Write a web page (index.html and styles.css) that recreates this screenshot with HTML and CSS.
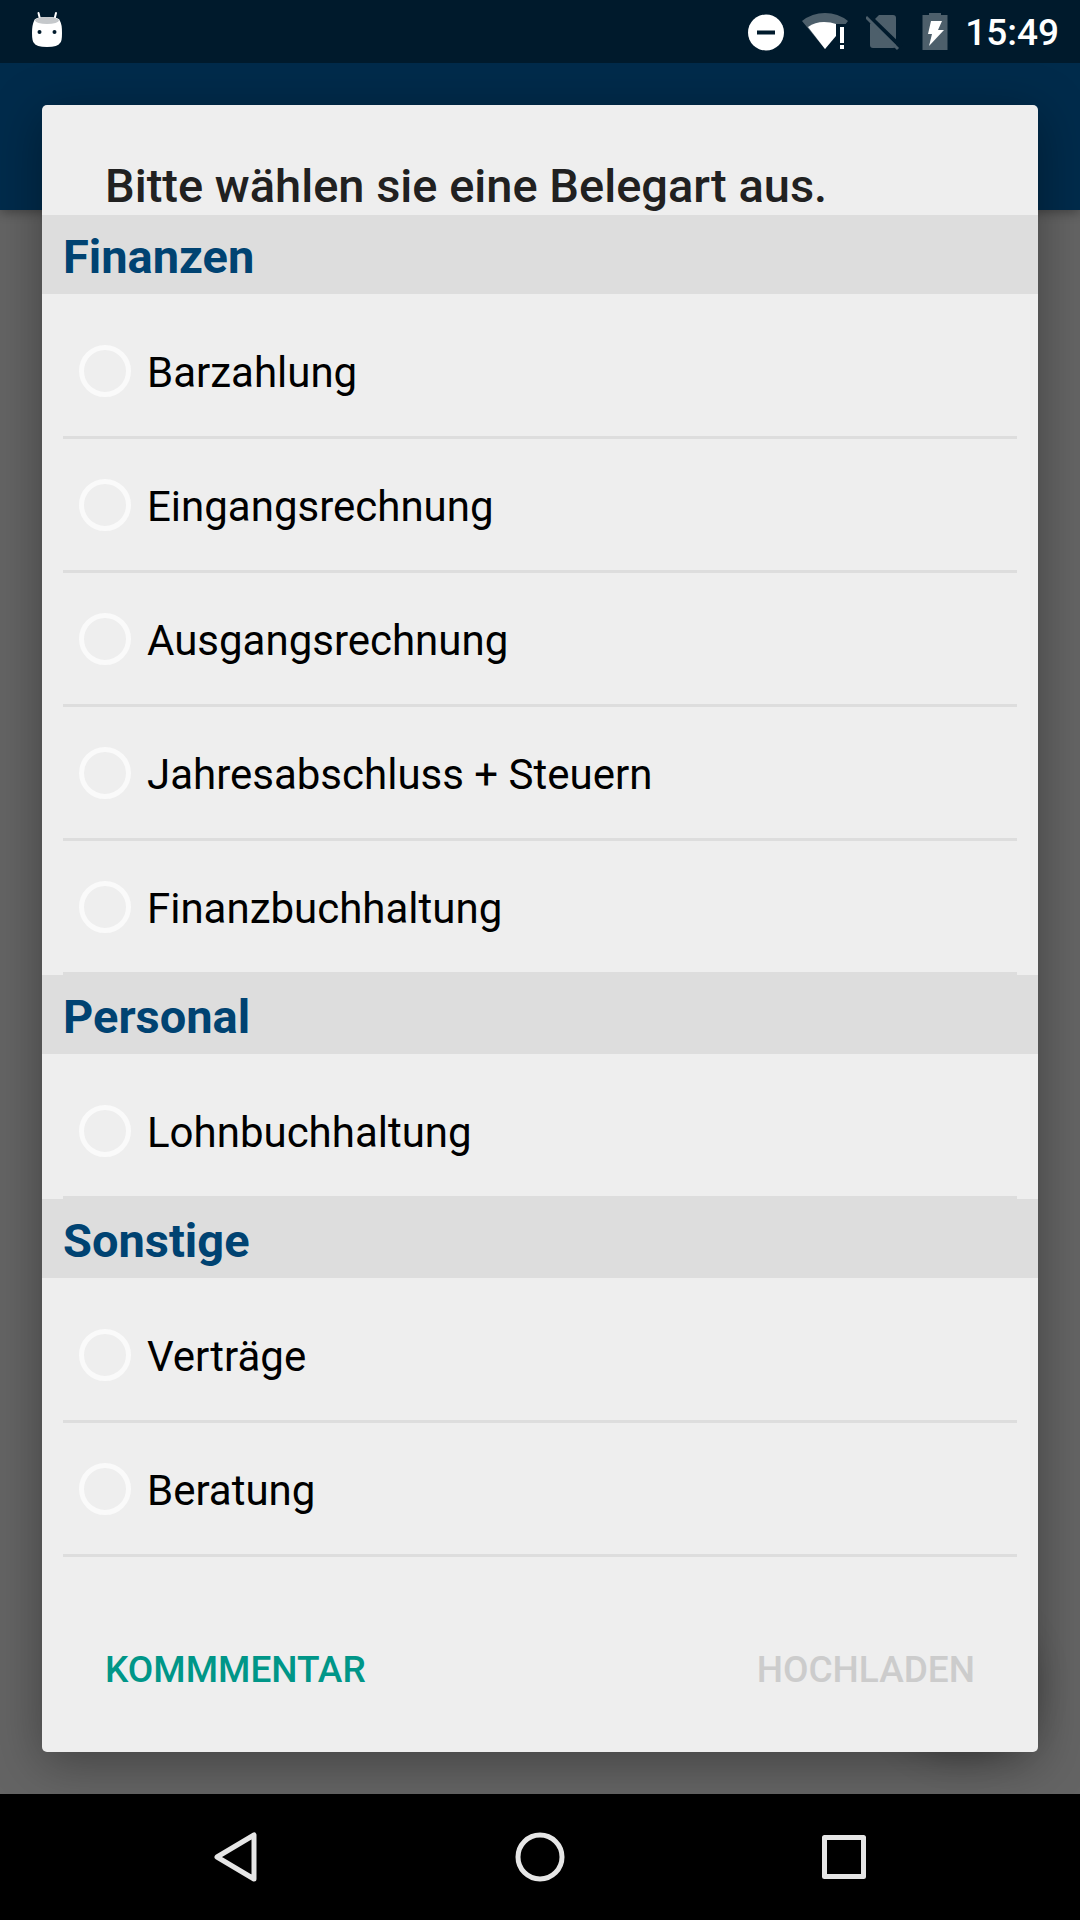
FILE: index.html
```html
<!DOCTYPE html>
<html lang="de">
<head>
  <meta charset="UTF-8" />
  <meta name="viewport" content="width=device-width, initial-scale=1.0" />
  <title>Belegart</title>
  <link rel="stylesheet" href="styles.css">
</head>
<body>
  <header class="status-bar">
    <svg class="robot" width="32" height="38" viewBox="0 0 32 38">
      <path d="M7.500 2L9 8M25 2L23.500 8" stroke="#fff" stroke-width="2" stroke-linecap="round" />
      <path d="M3 10Q3 6 16 6T29 10Q31 13 31 22T29 32Q27 36 16 36T3 32Q1 30 1 22T3 10Z" fill="#fff" />
      <ellipse cx="16" cy="9.500" rx="12" ry="3.500" fill="#c5c8cb" />
      <circle cx="8.500" cy="21" r="2" fill="#001a2c" />
      <circle cx="23.500" cy="21" r="2" fill="#001a2c" />
    </svg>
    <div class="status-icons">
      <svg width="36" height="38" viewBox="0 0 36 38">
        <circle cx="18" cy="19.500" r="18" fill="#fff" />
        <rect x="9" y="17.500" width="18" height="4" fill="#001a2c" />
      </svg>
      <svg width="46" height="38" viewBox="0 0 46 38">
        <path d="M0 8Q10 0 23 0T46 8L42 13H36V18L23 36Z" fill="#4d5f6b" />
        <path d="M6 14Q13 9 22 9Q29 9 34 11V23L23 36Z" fill="#fff" />
        <path d="M34 11H46V38H34Z" fill="#001a2c" />
        <path d="M38 14H42V30H38ZM38 32H42V36H38Z" fill="#fff" />
      </svg>
      <svg width="38" height="38" viewBox="0 0 38 38">
        <path d="M13 2H27Q30 2 30 5V32Q30 35 27 35H7Q4 35 4 32V11Z" fill="#4d5f6b" />
        <path d="M3 3L35 34" stroke="#001a2c" stroke-width="4" />
        <path d="M0 4L32 36" stroke="#4d5f6b" stroke-width="3" />
      </svg>
      <svg width="26" height="38" viewBox="0 0 26 38">
        <path d="M7 0H19V2H25.500V37H.5V2H7Z" fill="#4d5f6b" />
        <path d="M9 8H20L16 17H22L7 33L10 21H6Z" fill="#fff" />
      </svg>
    </div>
    <time class="clock">15:49</time>
  </header>

  <main class="screen">
    <div class="toolbar"></div>
    <div class="fab"></div>
    <form class="dialog" role="dialog" aria-labelledby="dialogTitle">
      <h1 id="dialogTitle">Bitte wählen sie eine Belegart aus.</h1>

      <h2>Finanzen</h2>
      <div class="group">
        <label class="option"><input type="radio" name="belegart" value="bar"> <span>Barzahlung</span></label>
        <label class="option"><input type="radio" name="belegart" value="eingang"> <span>Eingangsrechnung</span></label>
        <label class="option"><input type="radio" name="belegart" value="ausgang"> <span>Ausgangsrechnung</span></label>
        <label class="option"><input type="radio" name="belegart" value="abschluss"> <span>Jahresabschluss + Steuern</span></label>
        <label class="option"><input type="radio" name="belegart" value="fibu"> <span>Finanzbuchhaltung</span></label>
      </div>

      <h2>Personal</h2>
      <div class="group">
        <label class="option"><input type="radio" name="belegart" value="lohn"> <span>Lohnbuchhaltung</span></label>
      </div>

      <h2>Sonstige</h2>
      <div class="group">
        <label class="option"><input type="radio" name="belegart" value="vertrag"> <span>Verträge</span></label>
        <label class="option"><input type="radio" name="belegart" value="beratung"> <span>Beratung</span></label>
      </div>

      <div class="actions">
        <button type="button">KOMMMENTAR</button>
        <button type="submit" disabled>HOCHLADEN</button>
      </div>
    </form>
  </main>

  <nav class="nav-bar">
    <button type="button" aria-label="Zurück">
      <svg width="50" height="50" viewBox="0 0 50 50"><path d="M6 25L43 3V47Z" /></svg>
    </button>
    <button type="button" aria-label="Startseite">
      <svg width="50" height="50" viewBox="0 0 50 50"><circle cx="25" cy="25" r="22" /></svg>
    </button>
    <button type="button" aria-label="Übersicht">
      <svg width="50" height="50" viewBox="0 0 50 50"><rect x="5.500" y="5.500" width="39" height="39" /></svg>
    </button>
  </nav>
</body>
</html>
```

FILE: styles.css
```css
* {
  box-sizing: border-box;
}
body {
  margin: 0;
  min-height: 100vh;
  display: flex;
  flex-direction: column;
  font-family: Roboto, sans-serif;
  background: #646464;
}
svg {
  display: block;
}

/* status bar */
.status-bar {
  height: 63px;
  padding: 0 21px 0 31px;
  display: flex;
  align-items: center;
  background: #001a2c;
  color: #ffffff;
}
.robot {
  margin-bottom: 4px;
}
.status-icons {
  display: flex;
  gap: 18px;
  margin-left: auto;
  margin-right: 17px;
}
.clock {
  padding-top: 2px;
  font-size: 37px;
  font-weight: 500;
  line-height: 40px;
}

/* dimmed page behind the dialog */
.screen {
  flex: 1;
  display: flex;
  padding: 42px;
  position: relative;
  overflow: hidden;
}
.toolbar {
  position: absolute;
  top: 0;
  left: 0;
  right: 0;
  height: 147px;
  background: #002b4b;
  box-shadow: 0 3px 10px rgba(0,0,0,0.3);
}
.fab {
  position: absolute;
  right: 48px;
  bottom: 48px;
  width: 140px;
  height: 140px;
  border-radius: 50%;
  box-shadow: 0 8px 36px rgba(0,0,0,0.3);
}

/* dialog */
.dialog {
  flex: 1;
  display: flex;
  flex-direction: column;
  position: relative;
  background: #eeeeee;
  border-radius: 5px;
  box-shadow: 0 10px 50px rgba(0,0,0,0.35);
}
h1, h2 {
  margin: 0;
  font-size: 47px;
}
h1 {
  padding: 52px 63px 0;
  line-height: 58px;
  font-weight: 500;
  color: #212121;
}
h2 {
  padding: 14px 21px 10px;
  line-height: 55px;
  font-weight: 700;
  color: #004372;
  background: #dddddd;
}
.group {
  padding: 11px 21px 0;
}
.option {
  height: 134px;
  padding: 0 16px;
  display: flex;
  align-items: center;
  gap: 16px;
  font-size: 42px;
  color: #000000;
  border-bottom: 3px solid #dddddd;
}
.option span {
  padding-top: 4px;
}
.option input {
  appearance: none;
  width: 52px;
  height: 52px;
  margin: 0;
  border: 5px solid #fafafa;
  border-radius: 50%;
}
.option input:checked {
  background: #009688;
}
.actions {
  margin-top: auto;
  padding: 0 63px 51px;
  display: flex;
  justify-content: space-between;
}
.actions button {
  padding: 0;
  border: none;
  background: none;
  font-family: inherit;
  font-size: 37px;
  font-weight: 500;
  line-height: 62px;
  color: #009688;
}
.actions button:disabled {
  color: #cccccc;
}

/* navigation bar */
.nav-bar {
  height: 126px;
  display: flex;
  justify-content: center;
  background: #000000;
}
.nav-bar button {
  flex: 0 1 304px;
  display: flex;
  align-items: center;
  justify-content: center;
  padding: 0;
  border: none;
  background: none;
}
.nav-bar svg {
  fill: none;
  stroke: #e6e6e6;
  stroke-width: 5;
  stroke-linejoin: round;
}
```
